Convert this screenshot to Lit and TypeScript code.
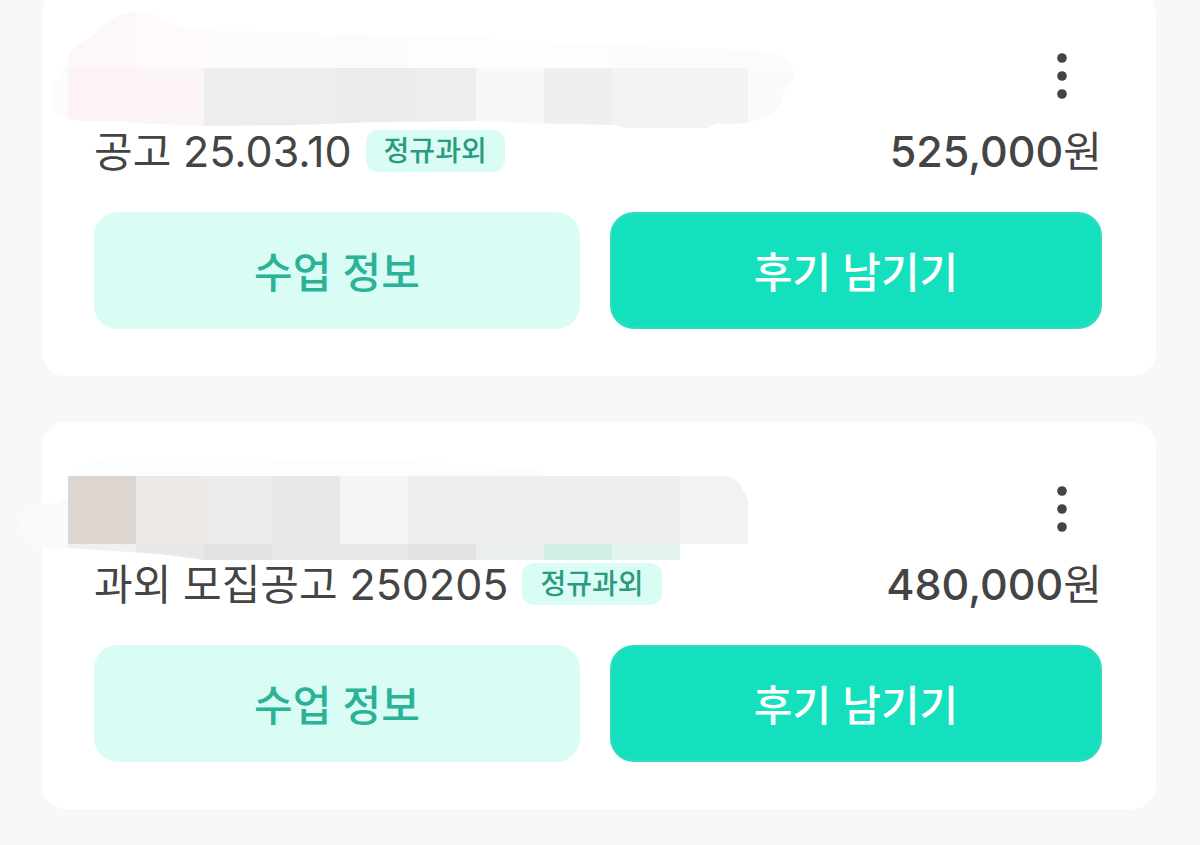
import { LitElement, html, css, svg, SVGTemplateResult } from "lit";
import { customElement, property } from "lit/decorators.js";

interface Lesson {
  words: string;
  digits: string;
  kind: string;
  price: string;
  mask: SVGTemplateResult;
}

// Pixelated cover over the private name line of the first card.
const firstMask = svg`
  <svg class="mask" viewBox="20 -11 800 150" width="800" height="150" aria-hidden="true">
    <defs>
      <clipPath id="brush">
        <path d="M50 100 Q50 84 60 76 Q61 68 68 62 Q68 48 82 42 Q92 38 102 26 Q118 12 140 12 Q154 13 164 20 Q178 28 206 30 L335 34 L410 37 L480 35 L500 40 L600 45 L750 50 Q784 52 792 64 Q796 76 790 84 Q782 90 782 98 Q778 116 748 123 L716 124 L708 128 L626 128 L616 125 L520 123 L476 121 L374 122 L300 125 L204 126 L136 123 L124 121 L80 121 L68 119 L54 113 Z" />
      </clipPath>
    </defs>
    <g clip-path="url(#brush)" shape-rendering="crispEdges">
      <rect x="40" y="0" width="28" height="130" fill="#fcfcfc" />
      <rect x="68" y="0" width="68" height="68" fill="#fcf7f8" />
      <rect x="136" y="0" width="68" height="68" fill="#fefafb" />
      <rect x="204" y="0" width="132" height="68" fill="#fcfcfc" />
      <rect x="336" y="0" width="72" height="68" fill="#fbfbfb" />
      <rect x="408" y="0" width="200" height="68" fill="#fdfdfd" />
      <rect x="608" y="0" width="192" height="68" fill="#fbfbfb" />
      <rect x="68" y="68" width="68" height="62" fill="#fdf2f5" />
      <rect x="136" y="68" width="68" height="62" fill="#fbf3f6" />
      <rect x="204" y="68" width="132" height="62" fill="#ededed" />
      <rect x="336" y="68" width="74" height="62" fill="#ebebeb" />
      <rect x="410" y="68" width="66" height="62" fill="#ebeeed" />
      <rect x="476" y="68" width="68" height="62" fill="#f8f8f8" />
      <rect x="544" y="68" width="68" height="62" fill="#efefef" />
      <rect x="612" y="68" width="136" height="62" fill="#f3f3f3" />
      <rect x="748" y="68" width="52" height="62" fill="#fafafa" />
    </g>
  </svg>`;

// Pixelated cover over the private name line of the second card.
const secondMask = svg`
  <svg class="mask" viewBox="20 422 800 150" width="800" height="150" aria-hidden="true">
    <defs>
      <clipPath id="brush">
        <path d="M20 530 Q20 516 28 510 L44 504 L60 503 L60 480 L74 472 Q90 462 116 457 L400 460 L608 474 L728 476 Q738 478 746 496 L748 500 L748 544 L680 544 L680 560 L204 560 L160 554 L68 548 L44 549 L28 544 Z" />
      </clipPath>
    </defs>
    <g clip-path="url(#brush)" shape-rendering="crispEdges">
      <rect x="20" y="500" width="48" height="50" fill="#fafafa" />
      <rect x="60" y="456" width="484" height="20" fill="#fdfdfd" />
      <rect x="68" y="476" width="68" height="68" fill="#ddd5cf" />
      <rect x="136" y="476" width="68" height="68" fill="#ede9e7" />
      <rect x="204" y="476" width="68" height="68" fill="#ebebeb" />
      <rect x="272" y="476" width="68" height="84" fill="#e7e7e7" />
      <rect x="340" y="476" width="68" height="68" fill="#f5f5f5" />
      <rect x="408" y="476" width="272" height="68" fill="#eeeeee" />
      <rect x="680" y="476" width="68" height="68" fill="#f2f2f2" />
      <rect x="68" y="544" width="68" height="16" fill="#f0f0f0" />
      <rect x="136" y="544" width="68" height="16" fill="#e8e8e8" />
      <rect x="204" y="544" width="68" height="16" fill="#e3e3e3" />
      <rect x="340" y="544" width="68" height="16" fill="#e7e7e7" />
      <rect x="408" y="544" width="68" height="16" fill="#e2e2e2" />
      <rect x="476" y="544" width="68" height="16" fill="#e9efed" />
      <rect x="544" y="544" width="68" height="16" fill="#d0eee6" />
      <rect x="612" y="544" width="68" height="16" fill="#e4f5f1" />
    </g>
  </svg>`;

const lessons: Lesson[] = [
  { words: "공고", digits: "25.03.10", kind: "정규과외", price: "525,000", mask: firstMask },
  { words: "과외 모집공고", digits: "250205", kind: "정규과외", price: "480,000", mask: secondMask },
];

@customElement("lesson-card")
export class LessonCard extends LitElement {
  @property({ attribute: false }) lesson!: Lesson;

  static styles = css`
    :host {
      display: block;
      position: relative;
      box-sizing: border-box;
      padding: 49px 54px 47px 52px;
      border-radius: 24px;
      background: #ffffff;
      color: #444444;
    }
    .mask {
      position: absolute;
      top: 0;
      left: -22px;
    }
    .top {
      display: flex;
      justify-content: flex-end;
    }
    button {
      border: 0;
      margin: 0;
      padding: 0;
      font-family: inherit;
      cursor: pointer;
    }
    .menu {
      display: grid;
      place-items: center;
      width: 80px;
      height: 76px;
      background: none;
      color: inherit;
    }
    .summary {
      display: flex;
      align-items: center;
      justify-content: space-between;
      height: 60px;
      margin: 7px 0 31px;
    }
    .title-group {
      display: flex;
      align-items: center;
      gap: 14px;
    }
    .title,
    .price {
      margin: 0;
      font-size: 42px;
      font-weight: 400;
      line-height: 60px;
      white-space: nowrap;
    }
    .number {
      font-size: 43px;
    }
    .price .number {
      font-weight: 500;
    }
    .badge {
      height: 42px;
      padding: 0 18px;
      border-radius: 12px;
      background: #d9fdf4;
      color: #2a9a80;
      font-size: 28px;
      font-weight: 500;
      line-height: 42px;
      white-space: nowrap;
    }
    .actions {
      display: grid;
      grid-template-columns: 81fr 82fr;
      gap: 30px;
    }
    .action {
      height: 117px;
      padding-top: 4px;
      border-radius: 24px;
      font-size: 42px;
      font-weight: 500;
      line-height: 60px;
    }
    .info {
      background: #d9fdf4;
      color: #2bb297;
    }
    .review {
      border: 2px solid #2fdcbf;
      background: #15e0be;
      color: #ffffff;
    }
  `;

  render() {
    const { words, digits, kind, price, mask } = this.lesson;
    return html`
      <div class="top">
        <button class="menu" type="button" aria-label="더보기">
          <svg width="12" height="48" viewBox="0 0 12 48" fill="currentColor" aria-hidden="true">
            <circle cx="6" cy="6" r="4.8" />
            <circle cx="6" cy="24" r="4.8" />
            <circle cx="6" cy="42" r="4.8" />
          </svg>
        </button>
      </div>
      <div class="summary">
        <div class="title-group">
          <h2 class="title">${words} <span class="number">${digits}</span></h2>
          <span class="badge">${kind}</span>
        </div>
        <p class="price"><span class="number">${price}</span>원</p>
      </div>
      <div class="actions">
        <button class="action info" type="button">수업 정보</button>
        <button class="action review" type="button">후기 남기기</button>
      </div>
      ${mask}
    `;
  }
}

@customElement("app-root")
export class AppRoot extends LitElement {
  static styles = css`
    :host {
      display: block;
      box-sizing: border-box;
      min-height: 100vh;
      overflow: hidden;
      background: #f8f8f8;
      font-family: Inter, "Noto Sans CJK KR", sans-serif;
    }
    .list {
      display: flex;
      flex-direction: column;
      gap: 46px;
      margin: -11px 44px 36px 42px;
    }
  `;

  render() {
    return html`
      <main class="list">
        ${lessons.map((lesson) => html`<lesson-card .lesson=${lesson}></lesson-card>`)}
      </main>
    `;
  }
}
